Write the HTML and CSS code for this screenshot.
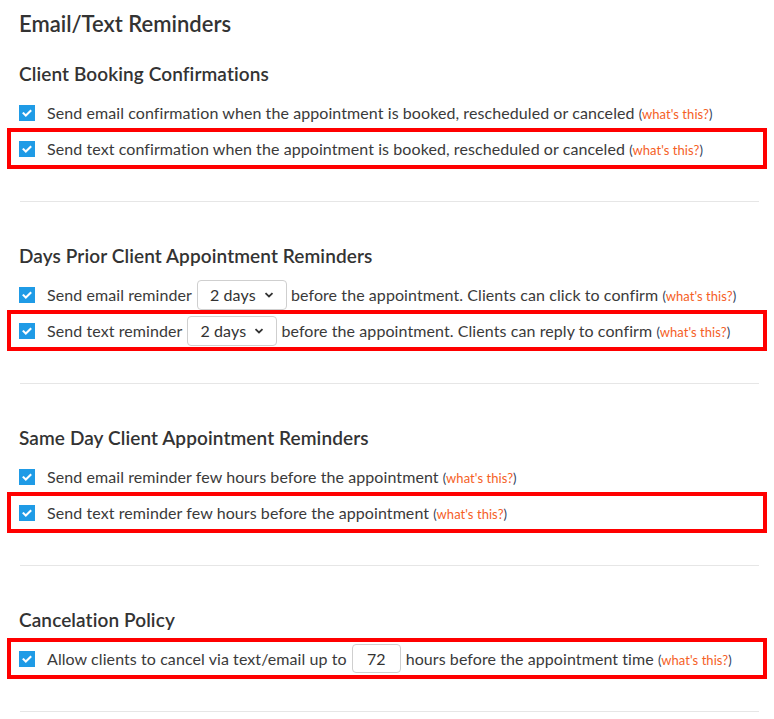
FILE: index.html
```html
<!DOCTYPE html>
<html lang="en">
<head>
<meta charset="utf-8">
<title>Email/Text Reminders</title>
<link rel="stylesheet" href="styles.css">
</head>
<body>
<div class="page">
  <h1 class="title">Email/Text Reminders</h1>

  <section class="section">
    <h2 class="heading">Client Booking Confirmations</h2>
    <div class="rows">
      <div class="row">
        <span class="check"><svg viewBox="0 0 16 16" width="16" height="16"><path d="M4.5 8.3l2.3 2.2 4.7-4.6" fill="none" stroke="#fff" stroke-width="2" stroke-linecap="square"/></svg></span>
        <span class="label">Send email confirmation when the appointment is booked, rescheduled or canceled <span class="help">(<a class="link">what's this?</a>)</span></span>
      </div>
      <div class="row highlight">
        <span class="check"><svg viewBox="0 0 16 16" width="16" height="16"><path d="M4.5 8.3l2.3 2.2 4.7-4.6" fill="none" stroke="#fff" stroke-width="2" stroke-linecap="square"/></svg></span>
        <span class="label">Send text confirmation when the appointment is booked, rescheduled or canceled <span class="help">(<a class="link">what's this?</a>)</span></span>
      </div>
    </div>
  </section>
  <hr class="divider">

  <section class="section">
    <h2 class="heading">Days Prior Client Appointment Reminders</h2>
    <div class="rows">
      <div class="row">
        <span class="check"><svg viewBox="0 0 16 16" width="16" height="16"><path d="M4.5 8.3l2.3 2.2 4.7-4.6" fill="none" stroke="#fff" stroke-width="2" stroke-linecap="square"/></svg></span>
        <span class="label">Send email reminder</span>
        <span class="select">2 days<svg class="chev" viewBox="0 0 10 6" width="10" height="6"><path d="M1.5 1.2L5 4.5l3.5-3.3" fill="none" stroke="#333" stroke-width="1.8"/></svg></span>
        <span class="label">before the appointment. Clients can click to confirm <span class="help">(<a class="link">what's this?</a>)</span></span>
      </div>
      <div class="row highlight">
        <span class="check"><svg viewBox="0 0 16 16" width="16" height="16"><path d="M4.5 8.3l2.3 2.2 4.7-4.6" fill="none" stroke="#fff" stroke-width="2" stroke-linecap="square"/></svg></span>
        <span class="label">Send text reminder</span>
        <span class="select">2 days<svg class="chev" viewBox="0 0 10 6" width="10" height="6"><path d="M1.5 1.2L5 4.5l3.5-3.3" fill="none" stroke="#333" stroke-width="1.8"/></svg></span>
        <span class="label">before the appointment. Clients can reply to confirm <span class="help">(<a class="link">what's this?</a>)</span></span>
      </div>
    </div>
  </section>
  <hr class="divider">

  <section class="section">
    <h2 class="heading">Same Day Client Appointment Reminders</h2>
    <div class="rows">
      <div class="row">
        <span class="check"><svg viewBox="0 0 16 16" width="16" height="16"><path d="M4.5 8.3l2.3 2.2 4.7-4.6" fill="none" stroke="#fff" stroke-width="2" stroke-linecap="square"/></svg></span>
        <span class="label">Send email reminder few hours before the appointment <span class="help">(<a class="link">what's this?</a>)</span></span>
      </div>
      <div class="row highlight">
        <span class="check"><svg viewBox="0 0 16 16" width="16" height="16"><path d="M4.5 8.3l2.3 2.2 4.7-4.6" fill="none" stroke="#fff" stroke-width="2" stroke-linecap="square"/></svg></span>
        <span class="label">Send text reminder few hours before the appointment <span class="help">(<a class="link">what's this?</a>)</span></span>
      </div>
    </div>
  </section>
  <hr class="divider">

  <section class="section">
    <h2 class="heading">Cancelation Policy</h2>
    <div class="rows">
      <div class="row highlight">
        <span class="check"><svg viewBox="0 0 16 16" width="16" height="16"><path d="M4.5 8.3l2.3 2.2 4.7-4.6" fill="none" stroke="#fff" stroke-width="2" stroke-linecap="square"/></svg></span>
        <span class="label">Allow clients to cancel via text/email up to</span>
        <span class="input">72</span>
        <span class="label">hours before the appointment time <span class="help">(<a class="link">what's this?</a>)</span></span>
      </div>
    </div>
  </section>
  <hr class="divider">
</div>
</body>
</html>
```

FILE: styles.css
```css
html, body {
  margin: 0;
  padding: 0;
  background: #fff;
}

body {
  font-family: "Lato", "Noto Sans", sans-serif;
  color: #363636;
}

.page {
  padding: 10px 15px 0 19px;
}

.title {
  margin: 0;
  font-size: 22px;
  line-height: 28px;
  font-weight: 600;
  color: #333;
}

.section {
  margin-top: 24px;
}

.divider + .section {
  margin-top: 42px;
}

.heading {
  margin: 0 0 10px;
  font-size: 19px;
  line-height: 24px;
  font-weight: 600;
  letter-spacing: 0.1px;
  color: #333;
}

.rows {
  display: flex;
  flex-direction: column;
  gap: 3px;
}

.row {
  display: flex;
  align-items: center;
  height: 33px;
  font-size: 16px;
  white-space: nowrap;
}

.row.highlight {
  margin: -4px -8px -4px -12px;
  padding: 0 4px 0 8px;
  border: 4px solid #ff0000;
}

.check {
  flex: none;
  width: 16px;
  height: 16px;
  margin-right: 12px;
  background: #1f9be6;
  display: flex;
}

.label {
  color: #3a3a3a;
  letter-spacing: 0.08px;
}

.help {
  font-size: 13px;
  letter-spacing: 0.05px;
  color: #2d3e5c;
}

.link {
  color: #f5601f;
}

.select {
  flex: none;
  display: inline-flex;
  align-items: center;
  justify-content: space-between;
  box-sizing: border-box;
  width: 90px;
  height: 30px;
  margin: 0 4px 0 5px;
  padding: 0 12px 0 12px;
  border: 1px solid #cfcfcf;
  border-radius: 4px;
  color: #333;
  font-size: 16px;
  letter-spacing: 0.1px;
}

.chev {
  flex: none;
}

.input {
  flex: none;
  display: inline-flex;
  align-items: center;
  justify-content: center;
  box-sizing: border-box;
  width: 49px;
  height: 29px;
  margin: 0 5px 0 5px;
  border: 1px solid #cfcfcf;
  border-radius: 4px;
  color: #333;
  font-size: 16px;
}

.divider {
  margin: 36px 0 0 1px;
  border: 0;
  border-top: 1px solid #e6e6e6;
  height: 0;
}
```
